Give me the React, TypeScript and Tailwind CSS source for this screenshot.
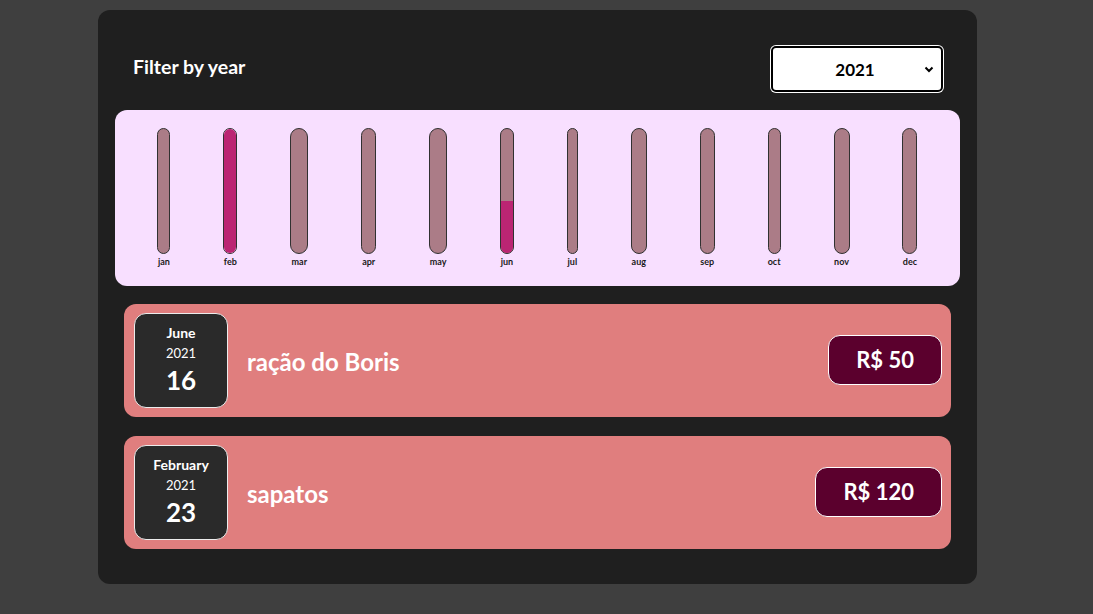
import React from "react";

const bars = [
  { label: "jan", w: "w-[13px]", fill: 0 },
  { label: "feb", w: "w-[14px]", fill: 100 },
  { label: "mar", w: "w-[18px]", fill: 0 },
  { label: "apr", w: "w-[15px]", fill: 0 },
  { label: "may", w: "w-[18px]", fill: 0 },
  { label: "jun", w: "w-[14px]", fill: 41.7 },
  { label: "jul", w: "w-[11px]", fill: 0 },
  { label: "aug", w: "w-[16px]", fill: 0 },
  { label: "sep", w: "w-[15px]", fill: 0 },
  { label: "oct", w: "w-[13px]", fill: 0 },
  { label: "nov", w: "w-[16px]", fill: 0 },
  { label: "dec", w: "w-[15px]", fill: 0 },
];

const items = [
  { month: "June", year: "2021", day: "16", title: "ração do Boris", price: "R$ 50" },
  { month: "February", year: "2021", day: "23", title: "sapatos", price: "R$ 120" },
];

export default function App() {
  return (
    <div
      className="min-h-screen bg-[#3f3f3f] pt-[10px] pb-[30px]"
      style={{ fontFamily: "Lato, 'Open Sans', sans-serif" }}
    >
      <div className="ml-[98px] w-[879px] rounded-[12px] bg-[#1f1f1f] px-[17px] pt-[35px] pb-[35px]">
        <div className="flex items-center justify-between pl-[18px] pr-[16px]">
          <span className="-mt-[5px] text-[19.5px] font-bold leading-[28px] text-white">Filter by year</span>
          <div className="rounded-[6px] bg-white p-[1px]">
            <div className="relative flex h-[46px] w-[172px] items-center justify-center rounded-[5px] border-2 border-black bg-white">
              <span className="mr-[4px] mt-[2px] text-[17px] font-bold text-black">2021</span>
              <svg className="absolute right-[7px] top-[18px]" width="10" height="7" viewBox="0 0 10 7">
                <path d="M1.5 1.5 L5 5 L8.5 1.5" stroke="black" strokeWidth="2" fill="none" />
              </svg>
            </div>
          </div>
        </div>

        <div className="mt-[17px] flex h-[176px] justify-around rounded-[12px] bg-[#f8dfff] px-[16px] pt-[18px] pb-[16px]">
          {bars.map((b) => (
            <div key={b.label} className={`${b.w} flex h-full flex-col items-center`}>
              <div className="flex h-[126px] w-full flex-col justify-end overflow-hidden rounded-[12px] border border-[#313131] bg-[#ab7c87]">
                <div className="w-full bg-[#bb2573]" style={{ height: `${b.fill}%` }} />
              </div>
              <span className="mt-[1px] text-[9px] font-bold leading-[14px] text-[#1a1a1a]">{b.label}</span>
            </div>
          ))}
        </div>

        <div className="mt-[18px] flex flex-col gap-[19px] px-[9px]">
          {items.map((it) => (
            <div
              key={it.title}
              className="flex h-[113px] items-center rounded-[12px] bg-[#e07e7e] pl-[10px] pr-[9px]"
            >
              <div className="flex h-[95px] w-[94px] flex-col items-center justify-center rounded-[12px] border border-[#ececec] bg-[#2a2a2a] pb-[2px] text-white">
                <span className="text-[14px] font-bold leading-[20px]">{it.month}</span>
                <span className="text-[13px] leading-[20px]">{it.year}</span>
                <span className="mt-[1px] text-[26px] font-bold leading-[32px]">{it.day}</span>
              </div>
              <div className="ml-[19px] mt-[2px] flex-1 text-[24px] font-bold text-white">{it.title}</div>
              <div className="-mt-[1px] rounded-[12px] border border-white bg-[#5b002d] px-[27px] py-[10px] text-[22px] font-bold leading-[28px] text-white">
                {it.price}
              </div>
            </div>
          ))}
        </div>
      </div>
    </div>
  );
}
